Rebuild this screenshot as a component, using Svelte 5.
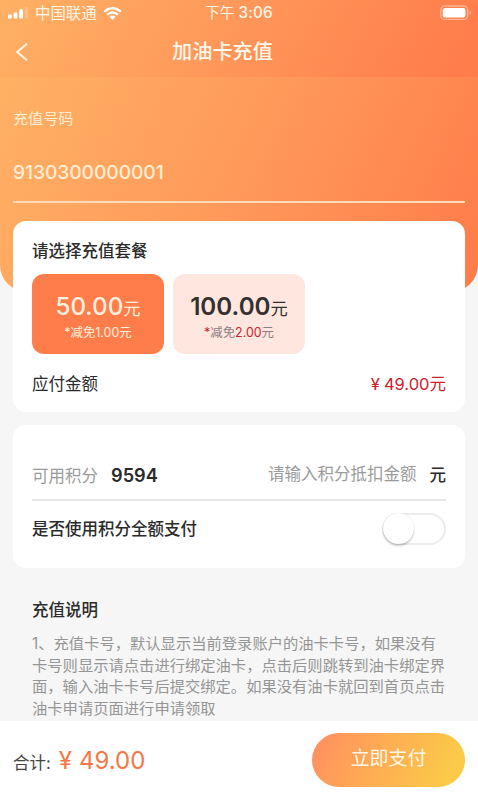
<script>
  let plans = [
    { price: '50.00', off: '1.00', id: 1 },
    { price: '100.00', off: '2.00', id: 2 }
  ];
  let selected = 1;
  const notes = [
    '1、充值卡号，默认显示当前登录账户的油卡卡号，如果没有',
    '卡号则显示请点击进行绑定油卡，点击后则跳转到油卡绑定界',
    '面，输入油卡卡号后提交绑定。如果没有油卡就回到首页点击',
    '油卡申请页面进行申请领取'
  ];
</script>

<div class="app">
  <header>
    <div class="status">
      <div class="carrier">
        <svg class="signal" width="20" height="12" viewBox="0 0 20 12">
          <rect x="0" y="7.6" width="3.8" height="3.9" rx=".8" />
          <rect x="5.6" y="5.6" width="3.8" height="5.9" rx=".8" />
          <rect x="11.2" y="2.2" width="3.8" height="9.3" rx=".8" />
          <rect x="16.6" y="0" width="3.4" height="11.5" rx=".8" opacity=".2" />
        </svg>
        <span>中国联通</span>
        <svg class="wifi" width="19" height="13" viewBox="0 0 19 13">
          <path d="M1.2 4.6 Q9.5 -2.2 17.8 4.6" />
          <path d="M4.1 7.6 Q9.5 3.2 14.9 7.6" />
          <path class="dot" d="M6.5 9.8 Q9.5 7.4 12.5 9.8 L9.5 12.9Z" />
        </svg>
      </div>
      <div class="time">下午 <b>3:06</b></div>
      <svg class="battery" width="32" height="16" viewBox="0 0 32 16">
        <rect x=".8" y="1" width="26.8" height="13.4" rx="4" fill="none" stroke="#fff" stroke-opacity=".4" stroke-width="1.4" />
        <rect x="2.8" y="3" width="22.6" height="9.4" rx="2.2" fill="#fff" />
        <path d="M29.5 5.4v4.6q1.7-.7 1.7-2.3t-1.7-2.3z" fill="#fff" fill-opacity=".4" />
      </svg>
    </div>
    <nav>
      <svg class="back" width="14" height="20" viewBox="0 0 14 20"><path d="M12 1.8 2.2 10 12 18.2" /></svg>
      <h1>加油卡充值</h1>
    </nav>
  </header>

  <main>
    <section class="account">
      <div class="label">充值号码</div>
      <div class="number">9130300000001</div>
    </section>

    <section class="card packages">
      <h2>请选择充值套餐</h2>
      <div class="plans">
        {#each plans as plan (plan.id)}
          <button class="plan" class:active={plan.id === selected} on:click={() => (selected = plan.id)}>
            <span class="price"><b>{plan.price}</b>元</span>
            <span class="off"><i>*</i>减免<i>{plan.off}</i>元</span>
          </button>
        {/each}
      </div>
      <div class="due"><span>应付金额</span><span class="red"><em>¥</em>49.00元</span></div>
    </section>

    <section class="card points">
      <div class="row first">
        <span class="grey">可用积分</span><b class="balance">9594</b>
        <span class="hint">请输入积分抵扣金额</span><span class="unit">元</span>
      </div>
      <div class="row second">
        <span class="question">是否使用积分全额支付</span>
        <span class="switch"><span class="knob"></span></span>
      </div>
    </section>

    <section class="notes">
      <h2>充值说明</h2>
      {#each notes as line}<p>{line}</p>{/each}
    </section>
  </main>

  <footer>
    <span class="total">合计:</span><span class="sum"><em>¥</em>49.00</span>
    <button class="pay">立即支付</button>
  </footer>
</div>

<style>
  :global(body) { margin: 0; }
  .app {
    width: 478px; height: 798px; overflow: hidden; background: #f6f6f6;
    display: flex; flex-direction: column; white-space: nowrap; color: #2b2b2b;
    font-family: Inter, "Noto Sans CJK SC", sans-serif; font-size: 16.5px;
  }
  * { box-sizing: border-box; }
  h1, h2, p { margin: 0; }
  i, em { font-style: normal; }
  button { border: 0; padding: 0; font-family: inherit; }

  header { height: 77px; flex: none; background: linear-gradient(118deg, #ffb164 0%, #ff9659 50%, #ff7c4b 96%); color: #fff; }
  .status { height: 25px; display: grid; grid-template-columns: 1fr auto 1fr; align-items: center; padding: 0 6px 0 8px; font-size: 15.4px; line-height: 25px; color: #fff5e4; }
  .carrier { display: flex; align-items: center; }
  .signal { fill: #fff; margin-right: 7px; }
  .wifi { margin-left: 6px; fill: none; stroke: #fff; stroke-width: 2.4; }
  .wifi .dot { fill: #fff; stroke: none; }
  .time { font-size: 14.6px; margin-left: -2px; }
  .time b { font-weight: 500; font-size: 15.3px; letter-spacing: .2px; }
  .battery { justify-self: end; }
  nav { height: 54px; display: flex; align-items: center; }
  .back { margin-left: 15px; fill: none; stroke: #fff5e4; stroke-width: 2; }
  h1 { margin-left: 143px; font-size: 20.2px; font-weight: 500; line-height: 52px; color: #fff7ea; }

  main { height: 644px; flex: none; padding: 0 13px; background: #f6f6f6; position: relative; z-index: 0; }
  main::before { content: ""; position: absolute; z-index: -1; left: 0; top: 0; width: 478px; height: 215px; border-radius: 0 0 27px 27px; background: linear-gradient(115deg, #ffb164 0%, #ff9659 55%, #ff7b49 100%); }
  .account { height: 126px; border-bottom: 2px solid #ffdbb9; color: #ffeed3; padding-top: 31px; }
  .label { font-size: 15.1px; line-height: 21px; }
  .number { font-size: 19.3px; line-height: 28px; margin-top: 29px; font-weight: 500; letter-spacing: -.1px; }

  .card { background: #fff; border-radius: 13px; padding: 0 19px; }
  .packages { margin-top: 18px; height: 191px; padding-top: 18px; }
  h2 { font-size: 16.5px; line-height: 24px; font-weight: 500; }
  .plans { display: flex; gap: 9px; margin-top: 11px; }
  .plan { width: 132px; height: 80px; border-radius: 12px; background: #ffe7e0; color: #35302e; display: flex; flex-direction: column; align-items: center; justify-content: flex-start; padding-top: 17px; }
  .price { font-size: 17.3px; line-height: 32px; }
  .price b { font-size: 24.2px; font-weight: 600; }
  .off { font-size: 12.4px; line-height: 20px; margin-top: -2px; color: #8b807c; }
  .off i { color: #d0202c; }
  .plan.active { background: #ff7d4b; color: #fff0df; }
  .active .price b { font-weight: 500; }
  .active .off, .active .off i { color: #fff0df; }
  .due { display: flex; justify-content: space-between; line-height: 24px; margin-top: 18px; }
  .red { color: #cf202d; }
  em { display: inline-block; }
  .red em { margin-right: 4px; }

  .points { margin-top: 13px; height: 143px; }
  .row { display: flex; align-items: center; }
  .first { height: 76px; border-bottom: 2px solid #e9e9e9; padding-top: 25px; }
  .grey, .hint { color: #9b9b9b; }
  .balance { font-size: 18.2px; font-weight: 600; margin-left: 13px; }
  .hint { margin: 0 1px 3px auto; }
  .unit { margin: 0 0 2px 12px; font-weight: 500; }
  .second { height: 56px; justify-content: space-between; }
  .question { font-weight: 500; padding-bottom: 2px; }
  .switch { width: 64px; height: 32px; border: 2px solid #ececec; border-radius: 16px; }
  .knob { display: block; width: 31px; height: 31px; margin: -2px 0 0 -1px; border-radius: 50%; background: #fff; box-shadow: 0 2px 2px #0003, 0 0 1px #0002; }

  .notes { padding: 30px 19px 0; }
  .notes p { color: #959595; font-size: 15.3px; line-height: 21.5px; }
  .notes h2 { margin-bottom: 11px; }

  footer { height: 77px; flex: none; background: #fff; display: flex; align-items: center; padding: 0 13px; }
  .total { color: #444; padding-top: 4px; }
  .sum { color: #f47749; font-size: 24px; margin-left: 8px; padding-top: 2px; }
  .sum em { margin-right: 7px; }
  .pay { margin-left: auto; width: 153px; height: 54px; border-radius: 27px; color: #fff7e6; font-size: 18.9px; line-height: 52px; padding-bottom: 1px; background: linear-gradient(115deg, #ff8d62 0%, #ffa357 30%, #fbcb48 90%); }
</style>
